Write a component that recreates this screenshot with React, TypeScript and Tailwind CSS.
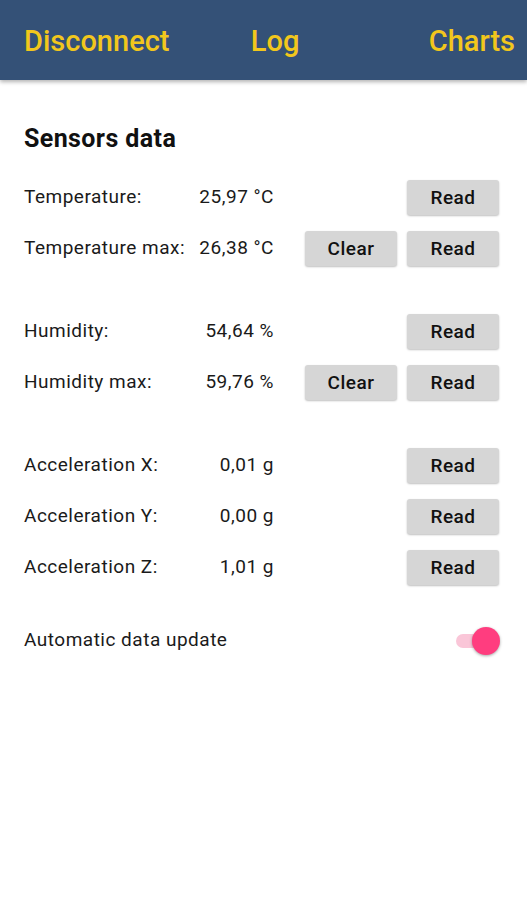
import React, { useState } from 'react';

const Btn: React.FC<{ label: string }> = ({ label }) => (
  <button className="w-[92px] h-[35px] bg-[#d6d6d6] rounded-[3px] shadow-[0_1px_2px_rgba(0,0,0,0.25)] text-[19px] tracking-[0.5px] font-medium text-[#111] pt-[3px]">
    {label}
  </button>
);

interface RowProps {
  label: string;
  value: string;
  clear?: boolean;
}

const Row: React.FC<RowProps> = ({ label, value, clear }) => (
  <div className="flex items-center h-[51px] text-[19px] tracking-[0.5px] text-[#1a1a1a]">
    <div className="w-[165px]">{label}</div>
    <div className="w-[85px] text-right">{value}</div>
    <div className="flex-1 flex justify-end gap-[10px] pr-[4px]">
      {clear && <Btn label="Clear" />}
      <Btn label="Read" />
    </div>
  </div>
);

export default function App() {
  const [auto, setAuto] = useState(true);

  return (
    <div className="w-[527px] h-[900px] bg-white font-['Roboto',sans-serif]">
      {/* Top bar */}
      <div className="h-[80px] bg-[#345177] shadow-[0_2px_4px_rgba(0,0,0,0.3)] flex items-center justify-between pl-[24px] pr-[12px] pt-[4px] text-[#f2c71c] text-[29px] font-medium">
        <span>Disconnect</span>
        <span className="pr-[48px]">Log</span>
        <span>Charts</span>
      </div>

      <div className="px-[24px]">
        <h2 className="mt-[40px] mb-[14px] text-[25px] tracking-[0.4px] font-bold text-[#111]">Sensors data</h2>

        <Row label="Temperature:" value="25,97 °C" />
        <Row label="Temperature max:" value="26,38 °C" clear />
        <div className="h-[32px]" />
        <Row label="Humidity:" value="54,64 %" />
        <Row label="Humidity max:" value="59,76 %" clear />
        <div className="h-[32px]" />
        <Row label="Acceleration X:" value="0,01 g" />
        <Row label="Acceleration Y:" value="0,00 g" />
        <Row label="Acceleration Z:" value="1,01 g" />

        <div className="flex items-center justify-between mt-[28px] h-[40px]">
          <span className="text-[19px] tracking-[0.5px] text-[#1a1a1a]">Automatic data update</span>
          <button
            onClick={() => setAuto(!auto)}
            className="relative w-[48px] h-[30px] mr-[3px]"
          >
            <span className={`absolute left-[4px] right-[4px] top-[8px] h-[14px] rounded-full ${auto ? 'bg-[#fac6d8]' : 'bg-[#bdbdbd]'}`} />
            <span className={`absolute top-[1px] w-[28px] h-[28px] rounded-full shadow-[0_1px_3px_rgba(0,0,0,0.35)] ${auto ? 'right-[0px] bg-[#ff3d7f]' : 'left-[0px] bg-[#f5f5f5]'}`} />
          </button>
        </div>
      </div>
    </div>
  );
}
